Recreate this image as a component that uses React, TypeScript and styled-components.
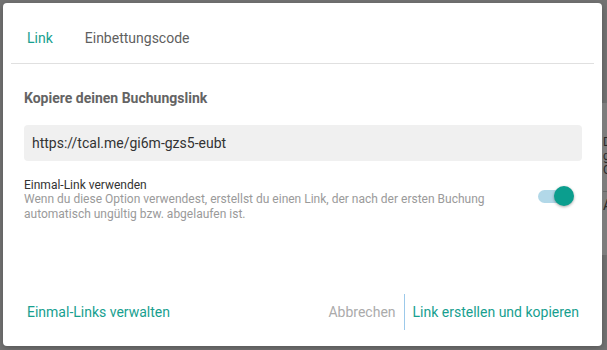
import React, { useState } from "react";
import styled, { createGlobalStyle } from "styled-components";

const Global = createGlobalStyle`
  html, body { margin: 0; padding: 0; }
  body {
    width: 607px; height: 350px; overflow: hidden;
    background: #737373;
    font-family: Roboto, "Noto Sans", Arial, sans-serif;
  }
`;

const Page = styled.div`
  display: flex;
  height: 350px;
  padding: 3px 0 4px 3px;
  box-sizing: border-box;
`;

const Dialog = styled.div`
  width: 599px;
  height: 343px;
  background: #fff;
  border-radius: 4px;
  display: flex;
  flex-direction: column;
  box-sizing: border-box;
  box-shadow: 0 2px 6px rgba(0,0,0,0.25);
`;

const Sliver = styled.div`
  flex: 1;
  margin-top: 100px;
  display: flex;
  flex-direction: column;
  font-size: 12px;
  line-height: 14px;
  color: #2a2a2a;
  background: #7d7d7d;
  padding-top: 32px;
  overflow: hidden;
  height: 120px;
  padding-left: 1px;
`;

const SliverRule = styled.div`
  border-top: 1px solid #666;
  margin-top: 14px;
  padding-top: 6px;
  font-size: 14px;
`;

const Tabs = styled.div`
  display: flex;
  margin: 0 8px 0 8px;
  padding: 0 0 0 16px;
  height: 60px;
  align-items: center;
  gap: 32px;
  border-bottom: 1px solid #e0e0e0;
`;

const Tab = styled.button<{ $active?: boolean }>`
  background: none;
  border: 0;
  padding: 0;
  font: inherit;
  font-size: 14px;
  color: ${(p) => (p.$active ? "#17a08f" : "#5f5f5f")};
  cursor: pointer;
  margin-top: 10px;
`;

const Body = styled.div`
  flex: 1;
  display: flex;
  flex-direction: column;
  padding: 0 20px 0 21px;
`;

const Heading = styled.h2`
  margin: 26px 0 0;
  font-size: 14px;
  font-weight: 700;
  color: #646464;
  line-height: 16px;
`;

const LinkField = styled.div`
  margin-top: 19px;
  height: 36px;
  background: #f0f0f0;
  border-radius: 4px;
  display: flex;
  align-items: center;
  padding-left: 8px;
  font-size: 14px;
  color: #333;
`;

const OptionRow = styled.div`
  display: flex;
  align-items: flex-start;
  margin-top: 17px;
  gap: 16px;
`;

const OptionText = styled.div`
  flex: 1;
  display: flex;
  flex-direction: column;
`;

const OptionTitle = styled.div`
  font-size: 12px;
  line-height: 14px;
  color: #333;
`;

const OptionDesc = styled.div`
  font-size: 12px;
  line-height: 15px;
  color: #9a9a9a;
`;

const Switch = styled.button<{ $on: boolean }>`
  position: relative;
  width: 32px;
  height: 13px;
  border: 0;
  padding: 0;
  margin: 12px 12px 0 0;
  border-radius: 7px;
  background: ${(p) => (p.$on ? "#b2d8e8" : "#cfcfcf")};
  cursor: pointer;
`;

const Knob = styled.span<{ $on: boolean }>`
  position: absolute;
  top: -4px;
  left: ${(p) => (p.$on ? "16px" : "-2px")};
  width: 20px;
  height: 20px;
  border-radius: 50%;
  background: ${(p) => (p.$on ? "#0b9e8e" : "#f5f5f5")};
  box-shadow: 0 1px 3px rgba(0,0,0,0.35);
`;

const Footer = styled.div`
  display: flex;
  align-items: center;
  height: 36px;
  padding: 0 23px 0 24px;
  margin-bottom: 16px;
`;

const TextButton = styled.button<{ $muted?: boolean }>`
  background: none;
  border: 0;
  padding: 0;
  font: inherit;
  font-size: 14px;
  color: ${(p) => (p.$muted ? "#ababab" : "#17a08f")};
  cursor: pointer;
`;

const Spacer = styled.div`
  flex: 1;
`;

const Separator = styled.div`
  width: 1px;
  align-self: stretch;
  background: #9cc9ea;
  margin: 0 8px;
`;

export default function App() {
  const [on, setOn] = useState(true);
  return (
    <>
      <Global />
      <Page>
        <Dialog>
          <Tabs>
            <Tab $active>Link</Tab>
            <Tab>Einbettungscode</Tab>
          </Tabs>
          <Body>
            <Heading>Kopiere deinen Buchungslink</Heading>
            <LinkField>https://tcal.me/gi6m-gzs5-eubt</LinkField>
            <OptionRow>
              <OptionText>
                <OptionTitle>Einmal-Link verwenden</OptionTitle>
                <OptionDesc>
                  Wenn du diese Option verwendest, erstellst du einen Link, der nach der ersten Buchung
                  <br />
                  automatisch ungültig bzw. abgelaufen ist.
                </OptionDesc>
              </OptionText>
              <Switch $on={on} onClick={() => setOn(!on)} aria-label="Einmal-Link verwenden">
                <Knob $on={on} />
              </Switch>
            </OptionRow>
          </Body>
          <Footer>
            <TextButton>Einmal-Links verwalten</TextButton>
            <Spacer />
            <TextButton $muted>Abbrechen</TextButton>
            <Separator />
            <TextButton>Link erstellen und kopieren</TextButton>
          </Footer>
        </Dialog>
        <Sliver>
          <span>D</span>
          <span>g</span>
          <span>G</span>
          <SliverRule>A</SliverRule>
        </Sliver>
      </Page>
    </>
  );
}
